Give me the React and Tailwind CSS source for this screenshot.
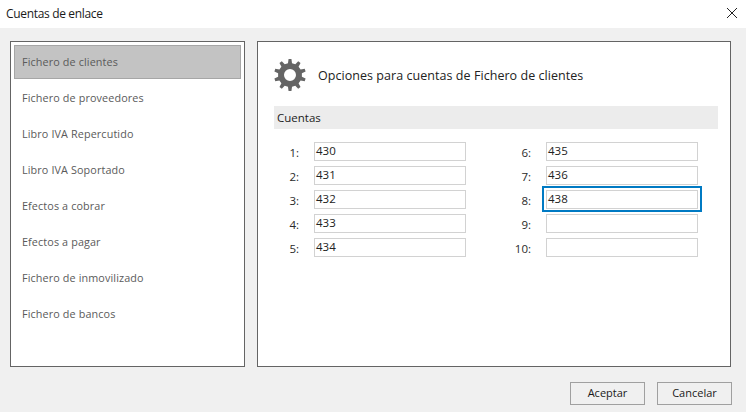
import React from "react";

const font = { fontFamily: '"Open Sans","Noto Sans",sans-serif' };

function gearPath() {
  const n = 10, R = 16, r = 12;
  let d = "";
  for (let i = 0; i < n; i++) {
    const a = (i * 2 * Math.PI) / n - Math.PI / 2;
    const pts = [[-0.17, r], [-0.09, R], [0.09, R], [0.17, r]];
    pts.forEach(([o, rad], j) => {
      const x = 16 + rad * Math.cos(a + o);
      const y = 16 + rad * Math.sin(a + o);
      d += (i === 0 && j === 0 ? "M" : "L") + x.toFixed(2) + " " + y.toFixed(2) + " ";
    });
  }
  d += "Z M22 16 A6 6 0 1 0 10 16 A6 6 0 1 0 22 16 Z";
  return d;
}

const items = [
  "Fichero de clientes",
  "Fichero de proveedores",
  "Libro IVA Repercutido",
  "Libro IVA Soportado",
  "Efectos a cobrar",
  "Efectos a pagar",
  "Fichero de inmovilizado",
  "Fichero de bancos",
];

const col1 = [["1:", "430"], ["2:", "431"], ["3:", "432"], ["4:", "433"], ["5:", "434"]];
const col2 = [["6:", "435"], ["7:", "436"], ["8:", "438", true], ["9:", ""], ["10:", ""]];

function Field({ label, value, focus }) {
  return (
    <div className="flex h-[19px] items-center">
      <span className="w-[25px] pt-[3px] text-right text-[11.5px] text-[#2a2a2a]">{label}</span>
      <div className="relative ml-[15px] h-[19px] w-[152px] border border-[#d2d2d2] bg-white pl-[1px] text-[11.5px] leading-[15px] text-[#222]">
        {value}
        {focus && <div className="absolute -top-[5px] -left-[5px] h-[26px] w-[160px] border-[2px] border-[#007ac3]" />}
      </div>
    </div>
  );
}

export default function App() {
  return (
    <div className="flex h-[412px] w-[746px] flex-col overflow-hidden bg-[#f0f0f0]" style={font}>
      <div className="flex h-[28px] items-center justify-between bg-white pr-[8px] pl-[6px] text-[12px] text-[#1a1a1a]">
        <span className="tracking-[-0.33px]">Cuentas de enlace</span>
        <svg width="12" height="12" viewBox="0 0 12 12" className="mt-[-2px]">
          <path d="M1 1 L11 11 M11 1 L1 11" stroke="#222" strokeWidth="1" fill="none" />
        </svg>
      </div>
      <div className="flex h-[339px] gap-[12px] pt-[13px] pl-[10px]">
        <div className="h-[326px] w-[235px] border border-[#646464] bg-white p-[3px]">
          {items.map((t, i) => (
            <div
              key={t}
              className={
                "mb-[2px] flex h-[34px] w-[227px] items-center pl-[7px] text-[10.8px] tracking-[0.12px] text-[#5a5a5a] " +
                (i === 0 ? "border border-[#a6a6a6] bg-[#c3c3c3]" : "border border-transparent")
              }
            >
              {t}
            </div>
          ))}
        </div>
        <div className="h-[326px] w-[474px] border border-[#646464] bg-white pt-[16px] pl-[16px]">
          <div className="flex h-[34px] items-center">
            <svg width="32" height="32" viewBox="0 0 32 32" className="shrink-0">
              <path d={gearPath()} fill="#656565" fillRule="evenodd" />
            </svg>
            <span className="ml-[12px] pt-[2px] text-[12.5px] tracking-[0.05px] text-[#222]">
              Opciones para cuentas de Fichero de clientes
            </span>
          </div>
          <div className="mt-[14px] flex h-[23px] w-[444px] items-center bg-[#ececec] pl-[3px] text-[11.5px] text-[#222]">
            Cuentas
          </div>
          <div className="mt-[13px] flex gap-[40px]">
            <div className="flex flex-col gap-[5px]">
              {col1.map(([l, v]) => <Field key={l} label={l} value={v} />)}
            </div>
            <div className="flex flex-col gap-[5px]">
              {col2.map(([l, v, f]) => <Field key={l} label={l} value={v} focus={f} />)}
            </div>
          </div>
        </div>
      </div>
      <div className="mt-[15px] flex gap-[12px] pl-[570px]">
        <div className="flex h-[23px] w-[75px] items-center justify-center border border-[#a0a0a0] bg-[#f0f0f0] text-[11px] text-[#1a1a1a]">Aceptar</div>
        <div className="flex h-[23px] w-[75px] items-center justify-center border border-[#a0a0a0] bg-[#f0f0f0] text-[11px] text-[#1a1a1a]">Cancelar</div>
      </div>
    </div>
  );
}
